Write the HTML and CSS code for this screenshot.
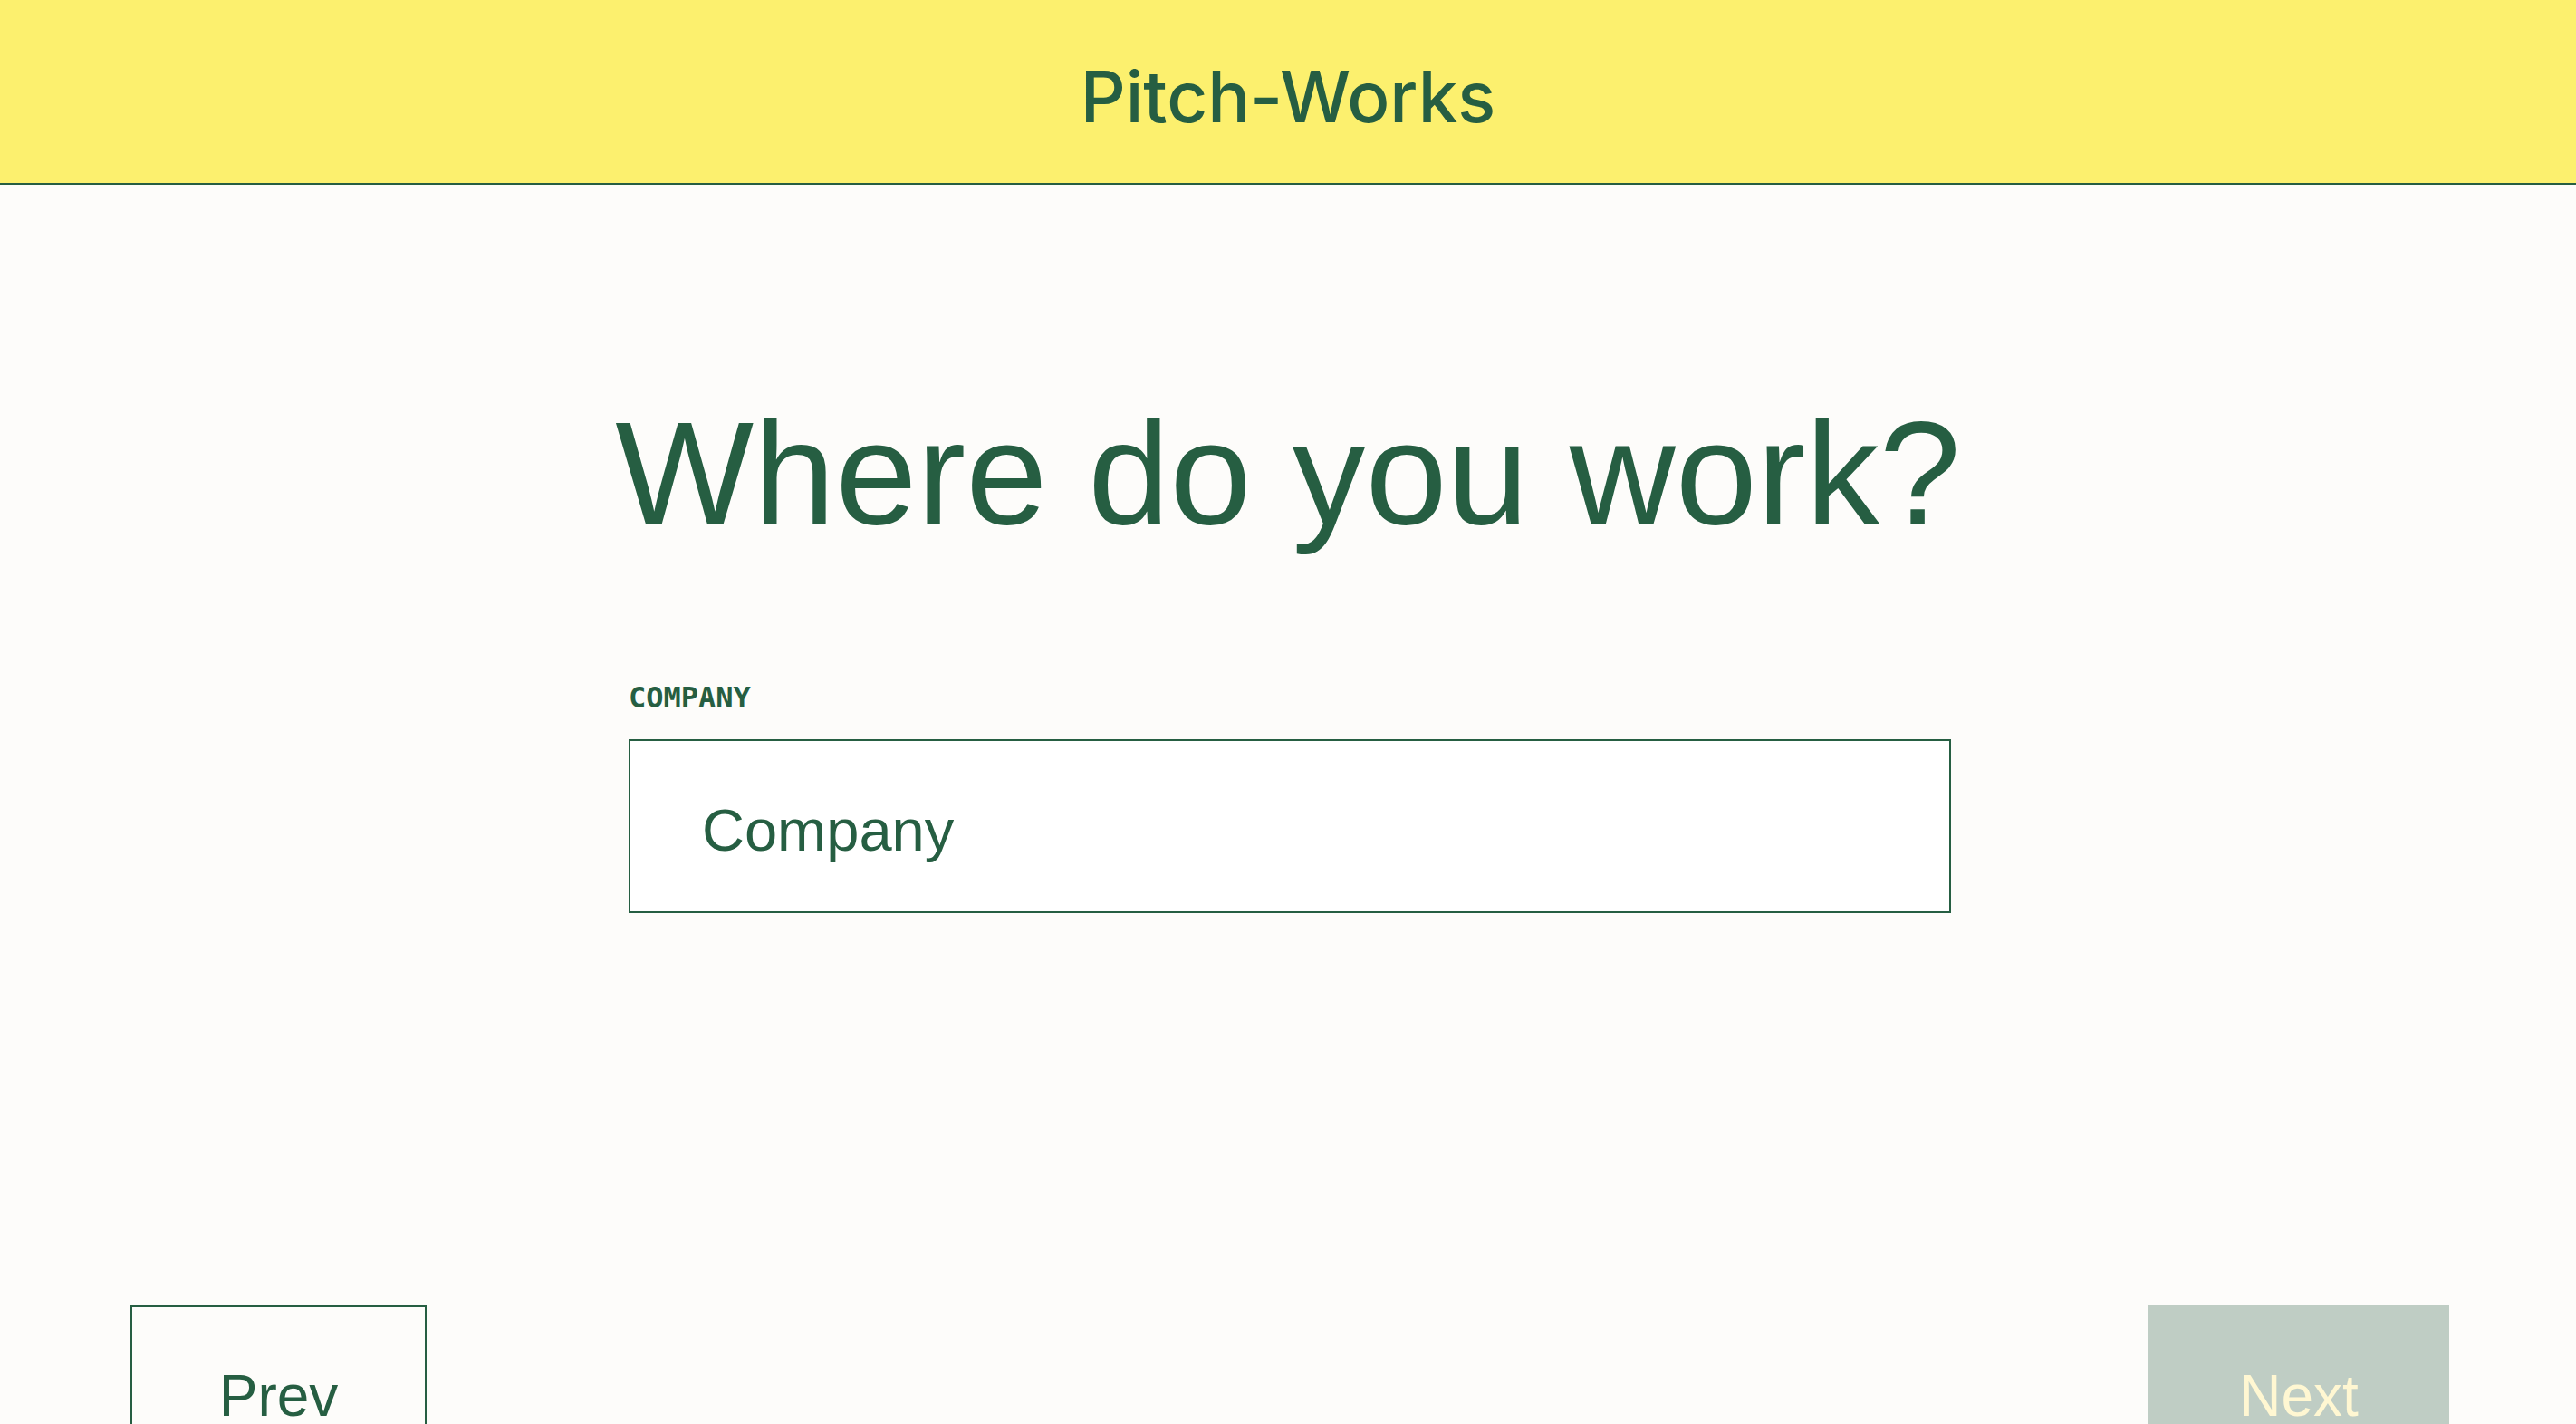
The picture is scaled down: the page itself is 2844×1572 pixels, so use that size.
FILE: index.html
```html
<!DOCTYPE html>
<html lang="en">
<head>
<meta charset="utf-8">
<title>Pitch-Works</title>
<link rel="stylesheet" href="styles.css">
</head>
<body>
<header class="topbar">
  <div class="brand">Pitch-Works</div>
</header>
<main class="step">
  <h1 class="question">Where do you work?</h1>
  <form class="field">
    <label class="field-label" for="company">COMPANY</label>
    <input class="field-input" id="company" type="text" placeholder="Company">
  </form>
</main>
<nav class="pager">
  <button class="btn btn-prev" type="button">Prev</button>
  <button class="btn btn-next" type="button" disabled>Next</button>
</nav>
</body>
</html>
```

FILE: styles.css
```css
html, body {
  margin: 0;
  padding: 0;
}
body {
  background: #FDFCFA;
  color: #265E42;
  font-family: "Liberation Sans", Arial, sans-serif;
}
.topbar {
  box-sizing: border-box;
  height: 204px;
  background: #FCF06E;
  border-bottom: 2px solid #265E42;
  display: flex;
  align-items: center;
  justify-content: center;
  padding-top: 10px;
}
.brand {
  font-family: Inter, "Liberation Sans", sans-serif;
  font-weight: 500;
  font-size: 78px;
  line-height: normal;
  color: #265E42;
}
.step {
  display: flex;
  flex-direction: column;
  align-items: center;
}
.question {
  margin: 237px 0 0 0;
  font-size: 162px;
  font-weight: normal;
  line-height: 1;
  color: #265E42;
  text-align: center;
}
.field {
  margin: 151px 0 0 4px;
  width: 1460px;
  display: flex;
  flex-direction: column;
}
.field-label {
  font-family: "DejaVu Sans Mono", "Liberation Mono", monospace;
  font-weight: bold;
  font-size: 32px;
  line-height: 1;
  color: #265E42;
}
.field-input {
  box-sizing: border-box;
  margin-top: 30px;
  width: 100%;
  height: 192px;
  border: 2px solid #265E42;
  background: #FFFFFF;
  padding: 8px 0 0 79px;
  font-family: "Liberation Sans", Arial, sans-serif;
  font-size: 65px;
  color: #265E42;
  outline: none;
  border-radius: 0;
}
.field-input::placeholder {
  color: #265E42;
  opacity: 1;
}
.pager {
  display: flex;
  justify-content: space-between;
  padding: 0 140px 0 144px;
  margin-top: 433px;
}
.btn {
  box-sizing: border-box;
  height: 200px;
  font-family: "Liberation Sans", Arial, sans-serif;
  font-size: 64px;
  line-height: normal;
  border-radius: 0;
  padding: 0;
  display: flex;
  align-items: center;
  justify-content: center;
}
.btn-prev {
  width: 327px;
  background: #FDFCFA;
  border: 2px solid #265E42;
  color: #265E42;
}
.btn-next {
  width: 332px;
  background: #BFCDC4;
  border: none;
  color: #FFF7D2;
}
```
